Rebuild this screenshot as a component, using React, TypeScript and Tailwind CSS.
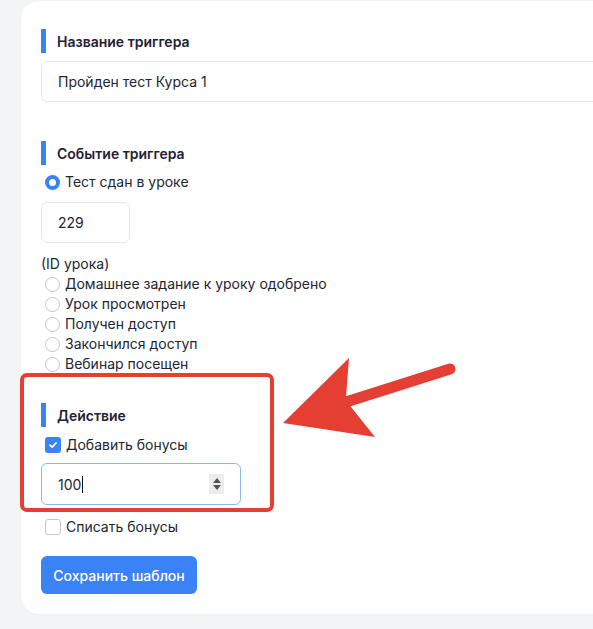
import React from "react";

const font = { fontFamily: "Inter, 'Noto Sans', sans-serif" };

function Heading({ children }: { children: React.ReactNode }) {
  return (
    <div className="flex items-center h-[24px]">
      <div className="w-[5px] h-[24px] bg-[#3b82f6]" />
      <div className="ml-[11px] pt-[2px] text-[14px] font-semibold text-[#1f2233] leading-[24px]">{children}</div>
    </div>
  );
}

function Radio({ checked, label }: { checked?: boolean; label: string }) {
  return (
    <div className="flex items-center h-[20px]">
      {checked ? (
        <div className="ml-[4px] w-[15px] h-[15px] rounded-full border-[4px] border-[#3b82f6] bg-white" />
      ) : (
        <div className="ml-[4px] w-[15px] h-[15px] rounded-full border border-[#c4c7cc] bg-white" />
      )}
      <span className="ml-[5px] text-[14px] text-[#222530] leading-[20px]">{label}</span>
    </div>
  );
}

function Checkbox({ checked, label }: { checked?: boolean; label: string }) {
  return (
    <div className="flex items-center h-[20px]">
      {checked ? (
        <div className="ml-[4px] w-[16px] h-[16px] rounded-[3px] bg-[#3b82f6] flex items-center justify-center">
          <svg width="10" height="10" viewBox="0 0 10 10">
            <path d="M2 5.2 L4.2 7.2 L8 3" stroke="white" strokeWidth="1.8" fill="none" strokeLinecap="round" strokeLinejoin="round" />
          </svg>
        </div>
      ) : (
        <div className="ml-[4px] w-[16px] h-[16px] rounded-[3px] border border-[#c4c7cc] bg-white" />
      )}
      <span className="ml-[5px] text-[14px] text-[#222530] leading-[20px]">{label}</span>
    </div>
  );
}

export default function App() {
  return (
    <div className="relative w-[593px] h-[629px] bg-[#f3f4f6] overflow-hidden" style={font}>
      <div className="ml-[21px] mt-[1px] w-[620px] h-[613px] bg-white rounded-[18px] pl-[20px] pt-[28px] shadow-[0_0_2px_rgba(0,0,0,0.04)]">
        <Heading>Название триггера</Heading>
        <div className="mt-[8px] h-[41px] w-[600px] border border-[#e6e7eb] rounded-[6px] flex items-center pl-[16px] text-[14px] text-[#222530]">
          Пройден тест Курса 1
        </div>

        <div className="mt-[39px]">
          <Heading>Событие триггера</Heading>
        </div>
        <div className="mt-[7px]">
          <Radio checked label="Тест сдан в уроке" />
        </div>
        <div className="mt-[10px] h-[41px] w-[89px] border border-[#e6e7eb] rounded-[6px] flex items-center pl-[16px] text-[14px] text-[#222530]">
          229
        </div>
        <div className="mt-[11px] h-[20px] text-[14px] leading-[20px] text-[#222530]">(ID урока)</div>
        <div className="flex flex-col">
          <Radio label="Домашнее задание к уроку одобрено" />
          <Radio label="Урок просмотрен" />
          <Radio label="Получен доступ" />
          <Radio label="Закончился доступ" />
          <Radio label="Вебинар посещен" />
        </div>

        <div className="mt-[29px]">
          <Heading>Действие</Heading>
        </div>
        <div className="mt-[8px]">
          <Checkbox checked label="Добавить бонусы" />
        </div>
        <div className="mt-[8px] h-[42px] w-[200px] border border-[#8fb8ea] rounded-[6px] flex items-center pl-[16px] pr-[16px] text-[14px] text-[#222530]">
          <span>100</span>
          <span className="w-[1px] h-[17px] bg-[#111] ml-[1px]" />
          <div className="ml-auto w-[15px] h-[20px] bg-[#ececec] flex flex-col items-center justify-center gap-[2px]">
            <svg width="8" height="5" viewBox="0 0 8 5"><path d="M0 5 L4 0 L8 5 Z" fill="#555" /></svg>
            <svg width="8" height="5" viewBox="0 0 8 5"><path d="M0 0 L4 5 L8 0 Z" fill="#555" /></svg>
          </div>
        </div>
        <div className="mt-[12px]">
          <Checkbox label="Списать бонусы" />
        </div>
        <button className="mt-[19px] h-[38px] w-[156px] rounded-[6px] bg-[#3b82f6] text-white text-[14px] font-medium">
          Сохранить шаблон
        </button>
      </div>

      {/* annotation overlay */}
      <div className="absolute left-[20px] top-[373px] w-[254px] h-[139px] border-[4px] border-[#e53e33] rounded-[7px] pointer-events-none" />
      <svg className="absolute left-0 top-0 pointer-events-none" width="593" height="629" viewBox="0 0 593 629">
        <line x1="346" y1="402" x2="450" y2="369" stroke="#e53e33" strokeWidth="11" strokeLinecap="round" />
        <polygon points="283,423 349,358 346,397 351,407 375,437" fill="#e53e33" />
      </svg>
    </div>
  );
}
